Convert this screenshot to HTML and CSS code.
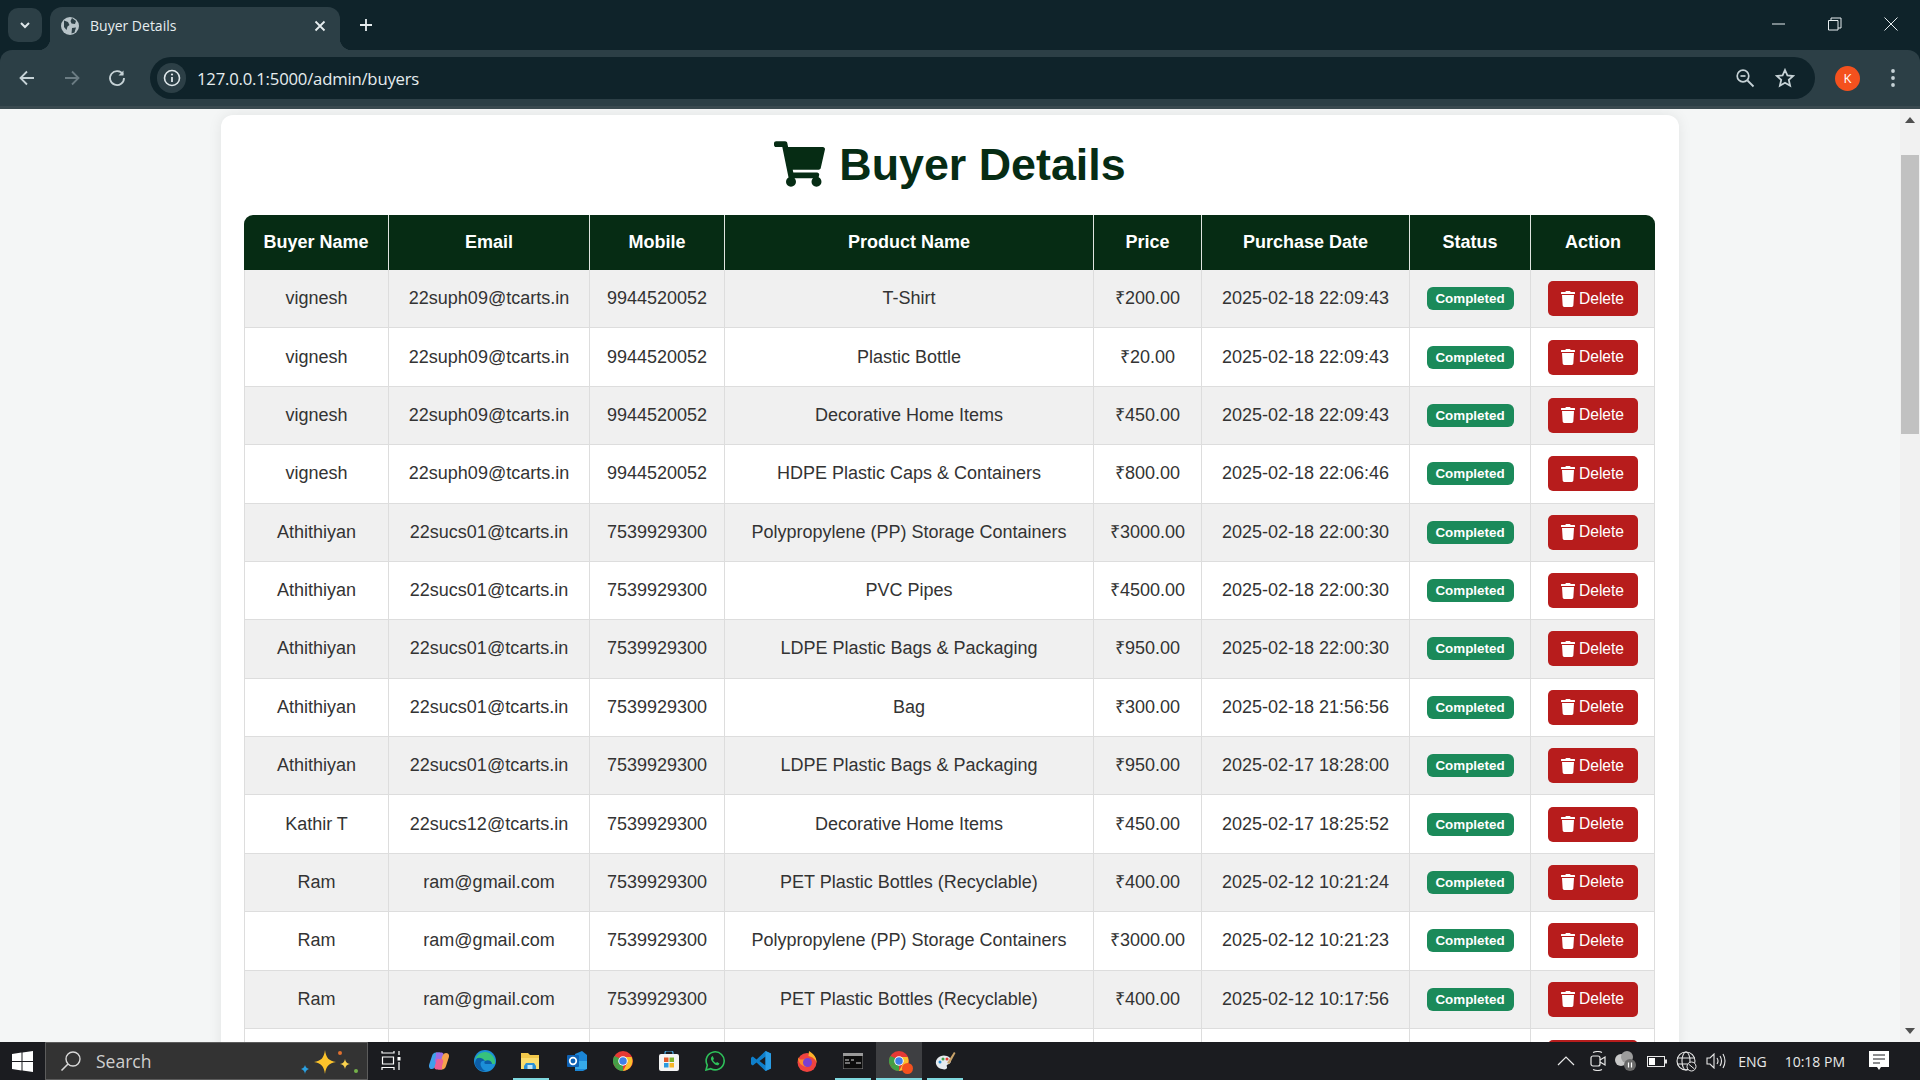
FILE: index.html
```html
<!DOCTYPE html>
<html lang="en">
<head>
<meta charset="utf-8">
<title>Buyer Details</title>
<link rel="stylesheet" href="styles.css">
</head>
<body>
<svg class="defs" width="0" height="0" aria-hidden="true">
  <defs>
    <symbol id="trash" viewBox="0 0 448 512"><path fill="currentColor" d="M432 32H312l-9.4-18.7A24 24 0 0 0 281.1 0H166.8a23.72 23.72 0 0 0-21.4 13.3L136 32H16A16 16 0 0 0 0 48v32a16 16 0 0 0 16 16h416a16 16 0 0 0 16-16V48a16 16 0 0 0-16-16zM53.2 467a48 48 0 0 0 47.9 45h245.8a48 48 0 0 0 47.9-45L416 128H32z"/></symbol>
    <symbol id="chrome" viewBox="0 0 40 40">
      <circle cx="20" cy="20" r="20" fill="#e53935"/>
      <path d="M20 20 2.7 30A20 20 0 0 0 20 40z" fill="#43a047"/>
      <path d="M20 20 2.7 30A20 20 0 0 1 2.7 10L12 14z" fill="#43a047"/>
      <path d="M20 12h17.3A20 20 0 0 1 20 40l9-17z" fill="#fbc02d"/>
      <circle cx="20" cy="20" r="9.5" fill="#fff"/>
      <circle cx="20" cy="20" r="7.5" fill="#3f7fe8"/>
    </symbol>
  </defs>
</svg>
<div class="screen">
  <header class="tabstrip">
    <button class="tabsearch">
      <svg width="14" height="14" viewBox="0 0 14 14"><path d="M3 5l4 4 4-4" fill="none" stroke="#dfe7ea" stroke-width="2"/></svg>
    </button>
    <div class="tab">
      <svg class="favicon" width="18" height="18" viewBox="0 0 18 18"><circle cx="9" cy="9" r="9" fill="#b8c4c9"/><path d="M3 3.500l4 1.500 1.500 3-2 1.500-1 3.500-2.500-3zM11 1l4 3-1 3-3.500-.5-1-2.500zM11 11l4-.5-1.500 5-3 1z" fill="#2c3f46"/></svg>
      <span class="tabtitle">Buyer Details</span>
      <svg class="tabclose" width="12" height="12" viewBox="0 0 12 12"><path d="M1.500 1.500l9 9M10.500 1.500l-9 9" stroke="#e6edef" stroke-width="1.800"/></svg>
    </div>
    <svg class="newtab" width="14" height="14" viewBox="0 0 14 14"><path d="M7 1v12M1 7h12" stroke="#e6edef" stroke-width="1.800"/></svg>
    <div class="winctl">
      <svg width="14" height="14" viewBox="0 0 14 14"><path d="M0 7h13" stroke="#e6edef" stroke-width="1"/></svg>
      <svg width="14" height="14" viewBox="0 0 14 14"><path d="M.5 3.500h9.500v9.500H.5zM3 3.500V1h10v10h-3" fill="none" stroke="#e6edef" stroke-width="1"/></svg>
      <svg width="14" height="14" viewBox="0 0 14 14"><path d="M.5.500l13 13M13.500.500l-13 13" stroke="#e6edef" stroke-width="1"/></svg>
    </div>
  </header>
  <nav class="toolbar">
    <svg class="navicon" width="18" height="18" viewBox="0 0 18 18"><path d="M16 9H3M9 2.500 2.500 9 9 15.500" fill="none" stroke="#c6d2d6" stroke-width="1.800"/></svg>
    <svg class="navicon" width="18" height="18" viewBox="0 0 18 18"><path d="M2 9h13M9 2.500 15.500 9 9 15.500" fill="none" stroke="#6b7c83" stroke-width="1.800"/></svg>
    <svg class="navicon" width="18" height="18" viewBox="0 0 18 18"><path d="M15 5.500A7 7 0 1 0 16 9" fill="none" stroke="#c6d2d6" stroke-width="1.800"/><path d="M15.500 1.500v5h-5z" fill="#c6d2d6"/></svg>
    <div class="omnibox">
      <span class="sitechip"><svg width="18" height="18" viewBox="0 0 18 18"><circle cx="9" cy="9" r="7.500" fill="none" stroke="#dfe7ea" stroke-width="1.600"/><path d="M9 8v5" stroke="#dfe7ea" stroke-width="1.800"/><circle cx="9" cy="5.500" r="1.100" fill="#dfe7ea"/></svg></span>
      <span class="url">127.0.0.1:5000/admin/buyers</span>
      <svg class="omni-zoom" width="20" height="20" viewBox="0 0 20 20"><circle cx="8" cy="8" r="5.800" fill="none" stroke="#c6d2d6" stroke-width="1.700"/><path d="M12.500 12.500l6 6" stroke="#c6d2d6" stroke-width="1.800"/><path d="M5.500 8h5" stroke="#c6d2d6" stroke-width="1.700"/></svg>
      <svg class="omni-star" width="20" height="20" viewBox="0 0 20 20"><path d="M10 2l2.400 5.400 5.800.6-4.400 3.900 1.300 5.800L10 14.700l-5.100 3 1.300-5.800L1.800 8l5.800-.6z" fill="none" stroke="#c6d2d6" stroke-width="1.800"/></svg>
    </div>
    <span class="avatar">K</span>
    <svg class="kebab" width="6" height="20" viewBox="0 0 6 20"><circle cx="3" cy="3" r="1.900" fill="#c6d2d6"/><circle cx="3" cy="10" r="1.900" fill="#c6d2d6"/><circle cx="3" cy="17" r="1.900" fill="#c6d2d6"/></svg>
  </nav>
  <div class="viewport">
    <main class="page">
      <section class="card">
        <h1 class="title">
          <svg class="cart" width="51" height="46" viewBox="0 0 576 512"><path fill="currentColor" d="M528.12 301.319l47.273-208C578.806 78.301 567.391 64 551.99 64H159.208l-9.166-44.81C147.758 8.021 137.93 0 126.529 0H24C10.745 0 0 10.745 0 24v16c0 13.255 10.745 24 24 24h69.883l70.248 343.435C147.325 417.1 136 435.222 136 456c0 30.928 25.072 56 56 56s56-25.072 56-56c0-15.674-6.447-29.835-16.824-40h209.647C430.447 426.165 424 440.326 424 456c0 30.928 25.072 56 56 56s56-25.072 56-56c0-22.172-12.888-41.332-31.579-50.405l5.517-24.276c3.413-15.018-8.002-29.319-23.403-29.319H218.117l-6.545-32h293.145c11.206 0 20.92-7.754 23.403-18.681z"/></svg>
          Buyer Details
        </h1>
        <table class="buyers">
          <colgroup>
            <col class="c-name"><col class="c-email"><col class="c-mobile"><col class="c-product"><col class="c-price"><col class="c-date"><col class="c-status"><col class="c-action">
          </colgroup>
          <thead>
            <tr><th>Buyer Name</th><th>Email</th><th>Mobile</th><th>Product Name</th><th>Price</th><th>Purchase Date</th><th>Status</th><th>Action</th></tr>
          </thead>
          <tbody>
            <tr><td>vignesh</td><td>22suph09@tcarts.in</td><td>9944520052</td><td>T-Shirt</td><td>₹200.00</td><td>2025-02-18 22:09:43</td><td><span class="badge">Completed</span></td><td><button class="del"><svg class="trash"><use href="#trash"/></svg>Delete</button></td></tr>
            <tr><td>vignesh</td><td>22suph09@tcarts.in</td><td>9944520052</td><td>Plastic Bottle</td><td>₹20.00</td><td>2025-02-18 22:09:43</td><td><span class="badge">Completed</span></td><td><button class="del"><svg class="trash"><use href="#trash"/></svg>Delete</button></td></tr>
            <tr><td>vignesh</td><td>22suph09@tcarts.in</td><td>9944520052</td><td>Decorative Home Items</td><td>₹450.00</td><td>2025-02-18 22:09:43</td><td><span class="badge">Completed</span></td><td><button class="del"><svg class="trash"><use href="#trash"/></svg>Delete</button></td></tr>
            <tr><td>vignesh</td><td>22suph09@tcarts.in</td><td>9944520052</td><td>HDPE Plastic Caps &amp; Containers</td><td>₹800.00</td><td>2025-02-18 22:06:46</td><td><span class="badge">Completed</span></td><td><button class="del"><svg class="trash"><use href="#trash"/></svg>Delete</button></td></tr>
            <tr><td>Athithiyan</td><td>22sucs01@tcarts.in</td><td>7539929300</td><td>Polypropylene (PP) Storage Containers</td><td>₹3000.00</td><td>2025-02-18 22:00:30</td><td><span class="badge">Completed</span></td><td><button class="del"><svg class="trash"><use href="#trash"/></svg>Delete</button></td></tr>
            <tr><td>Athithiyan</td><td>22sucs01@tcarts.in</td><td>7539929300</td><td>PVC Pipes</td><td>₹4500.00</td><td>2025-02-18 22:00:30</td><td><span class="badge">Completed</span></td><td><button class="del"><svg class="trash"><use href="#trash"/></svg>Delete</button></td></tr>
            <tr><td>Athithiyan</td><td>22sucs01@tcarts.in</td><td>7539929300</td><td>LDPE Plastic Bags &amp; Packaging</td><td>₹950.00</td><td>2025-02-18 22:00:30</td><td><span class="badge">Completed</span></td><td><button class="del"><svg class="trash"><use href="#trash"/></svg>Delete</button></td></tr>
            <tr><td>Athithiyan</td><td>22sucs01@tcarts.in</td><td>7539929300</td><td>Bag</td><td>₹300.00</td><td>2025-02-18 21:56:56</td><td><span class="badge">Completed</span></td><td><button class="del"><svg class="trash"><use href="#trash"/></svg>Delete</button></td></tr>
            <tr><td>Athithiyan</td><td>22sucs01@tcarts.in</td><td>7539929300</td><td>LDPE Plastic Bags &amp; Packaging</td><td>₹950.00</td><td>2025-02-17 18:28:00</td><td><span class="badge">Completed</span></td><td><button class="del"><svg class="trash"><use href="#trash"/></svg>Delete</button></td></tr>
            <tr><td>Kathir T</td><td>22sucs12@tcarts.in</td><td>7539929300</td><td>Decorative Home Items</td><td>₹450.00</td><td>2025-02-17 18:25:52</td><td><span class="badge">Completed</span></td><td><button class="del"><svg class="trash"><use href="#trash"/></svg>Delete</button></td></tr>
            <tr><td>Ram</td><td>ram@gmail.com</td><td>7539929300</td><td>PET Plastic Bottles (Recyclable)</td><td>₹400.00</td><td>2025-02-12 10:21:24</td><td><span class="badge">Completed</span></td><td><button class="del"><svg class="trash"><use href="#trash"/></svg>Delete</button></td></tr>
            <tr><td>Ram</td><td>ram@gmail.com</td><td>7539929300</td><td>Polypropylene (PP) Storage Containers</td><td>₹3000.00</td><td>2025-02-12 10:21:23</td><td><span class="badge">Completed</span></td><td><button class="del"><svg class="trash"><use href="#trash"/></svg>Delete</button></td></tr>
            <tr><td>Ram</td><td>ram@gmail.com</td><td>7539929300</td><td>PET Plastic Bottles (Recyclable)</td><td>₹400.00</td><td>2025-02-12 10:17:56</td><td><span class="badge">Completed</span></td><td><button class="del"><svg class="trash"><use href="#trash"/></svg>Delete</button></td></tr>
            <tr><td></td><td></td><td></td><td></td><td></td><td></td><td></td><td><button class="del" aria-label="Delete"></button></td></tr>
          </tbody>
        </table>
      </section>
    </main>
    <aside class="scrollbar">
      <span class="arrow-up"></span>
      <span class="thumb"></span>
      <span class="arrow-down"></span>
    </aside>
  </div>
  <footer class="taskbar">
    <div class="startbtn">
      <svg width="21" height="21" viewBox="0 0 21 21"><path d="M0 3l9.500-1.400V10H0zM10.500 1.400 21 0v10H10.500zM0 11h9.500v8.400L0 18zM10.500 11H21v10l-10.500-1.400z" fill="#fff"/></svg>
    </div>
    <div class="searchbox">
      <svg width="22" height="22" viewBox="0 0 22 22"><circle cx="13" cy="9" r="7" fill="none" stroke="#d8d8d8" stroke-width="1.400"/><path d="M8 14l-6.500 6.500" stroke="#d8d8d8" stroke-width="1.600"/></svg>
      <span class="searchtext">Search</span>
      <svg class="sparkles" width="58" height="26" viewBox="0 0 58 26">
        <path d="M24 0c1 8 4 11 11 12-7 1-10 4-11 12-1-8-4-11-11-12 7-1 10-4 11-12z" fill="#fcc32b"/>
        <path d="M44 9c.5 3 2 4.500 5 5-3 .5-4.500 2-5 5-.5-3-2-4.500-5-5 3-.5 4.500-2 5-5z" fill="#fcd34d"/>
        <path d="M4 15c.5 2 1.500 3 4 4-2.500 1-3.500 2-4 5-.5-3-1.500-4-4-5 2.500-1 3.500-2 4-4z" fill="#2a9fe0"/>
        <circle cx="39" cy="3" r="2" fill="#e0702f"/><circle cx="55" cy="21" r="2" fill="#74b24a"/>
      </svg>
    </div>
    <div class="apps">
      <span class="app app-first"><svg width="20" height="20" viewBox="0 0 20 20"><path d="M1 0v2h12V0M1.500 6h11v7h-11zM1 19v-2.500h12V19" fill="none" stroke="#fff" stroke-width="1.200"/><rect x="16.500" y="6" width="3" height="3.500" fill="#fff"/><path d="M18 0v4M18 11v8" stroke="#fff" stroke-width="1.200"/></svg></span>
      <span class="app"><svg width="20" height="20" viewBox="0 0 20 20"><path d="M7 1.500h4L7.500 12c-.8 3-2 6-4.500 6-2.500 0-3.500-2-2.800-4.500L3 5c.6-2.200 2-3.500 4-3.500z" fill="#3fa0ea"/><path d="M7 1.500h5.500c1 0 2 .7 2.200 2L12 12H8c-1.500 0-2.600-1.300-2.200-3L7 5z" fill="#9a6ce6"/><path d="M13 18.500H9L12.500 8c.8-3 2-6 4.500-6 2.500 0 3.500 2 2.800 4.500L17 15c-.6 2.200-2 3.500-4 3.500z" fill="#f6a24c"/><path d="M13 18.500H7.500c-1 0-2-.7-2.200-2L8 8h4c1.500 0 2.600 1.300 2.200 3L13 15z" fill="#ee5f92"/></svg></span>
      <span class="app"><svg width="22" height="22" viewBox="0 0 22 22"><circle cx="11" cy="11" r="11" fill="#1c8fd8"/><path d="M1 13C2 6 9 3 14 5c5 2 7 6 6 9h-8c-2 0-2-2-1-3-4-1-6 3-3 7 1 2 3 3 5 3C6 22 1 18 1 13z" fill="#0c5ea8"/><path d="M11 11c3-2 7 0 7 3h3c1-6-4-12-10-12C6 2 2 6 1 10c2-3 7-3 10 1z" fill="#37c27c"/></svg></span>
      <span class="app"><svg width="20" height="18" viewBox="0 0 20 18"><path d="M0 1h7l2 2h9v13H0z" fill="#f2c84b"/><path d="M0 6h18v11H0z" fill="#fbdc6d"/><path d="M5 11h8l2 3v3H3v-3z" fill="#2a8fd6"/><path d="M6.500 13h5v4h-5z" fill="#bfe4f7"/></svg></span>
      <span class="app"><svg width="20" height="20" viewBox="0 0 20 20"><path d="M8 3l7-3 5 4v14l-4 2H8z" fill="#1b86d6"/><path d="M8 10h12v8H8z" fill="#36a9e8"/><rect x="0" y="4" width="12" height="12" rx="1" fill="#0f62b4"/><circle cx="6" cy="10" r="3.300" fill="none" stroke="#fff" stroke-width="1.700"/></svg></span>
      <span class="app"><svg width="20" height="20"><use href="#chrome"/></svg></span>
      <span class="app"><svg width="20" height="20" viewBox="0 0 20 20"><path d="M6 4V2q0-2 2-2h4q2 0 2 2v2" fill="none" stroke="#4aa8e0" stroke-width="1.200"/><rect y="3" width="20" height="17" rx="2" fill="#f4f4f4"/><rect x="5" y="6.500" width="4.500" height="4.500" fill="#e25a2b"/><rect x="10.500" y="6.500" width="4.500" height="4.500" fill="#7cb32c"/><rect x="5" y="12" width="4.500" height="4.500" fill="#2b9ae0"/><rect x="10.500" y="12" width="4.500" height="4.500" fill="#f5b62a"/></svg></span>
      <span class="app"><svg width="20" height="20" viewBox="0 0 20 20"><path d="M1 19l1.300-4.800A9 9 0 1 1 5.800 17.700z" fill="none" stroke="#2ec05a" stroke-width="1.600"/><path d="M7 5.500c-1.500 1-1.500 3 .5 5.500s4.500 4 6 3l1-1.500-2.500-1.500-1 1c-1-.3-2.500-1.800-3-3l1-1L7.800 5z" fill="#2ec05a"/></svg></span>
      <span class="app"><svg width="20" height="20" viewBox="0 0 20 20"><path d="M14.500 0 20 2.500v15L14.500 20l-9-8.500L1.800 14.500 0 13.200V6.800l1.800-1.300 3.700 3z" fill="#0f7fcb"/><path d="M14.500 5.500 8.500 10l6 4.500z" fill="#1b1c20"/><path d="M14.500 0 20 2.500v15L14.500 20z" fill="#2a9ce4"/></svg></span>
      <span class="app"><svg width="20" height="21" viewBox="0 0 20 21"><circle cx="10" cy="11.500" r="9.500" fill="#f0433f"/><path d="M12 0c5 3 8 7 7.500 12-1-4-4-6-8-7z" fill="#fdb32b"/><path d="M1 6c1 3 4 3 6 2 3-1 6 0 7 3l-5 5C5 15 1 12 1 6z" fill="#fb8b2b"/><circle cx="10.500" cy="11.500" r="4.500" fill="#7a3fd0"/></svg></span>
      <span class="app"><svg width="20" height="16" viewBox="0 0 20 16"><rect width="20" height="16" fill="#0c0c0c" stroke="#8a8a8a"/><rect width="20" height="3" fill="#9a9a9a"/><path d="M2 7h4M8 7h3M13 10h5M2 10h5" stroke="#d8d8d8" stroke-width="1.200"/></svg></span>
      <span class="app app-active"><svg width="20" height="20"><use href="#chrome"/></svg><span class="profile-dot"></span></span>
      <span class="app"><svg width="21" height="20" viewBox="0 0 21 20"><path d="M1 13C0 7 6 3 12 5c5 2 5 6 2 8-2 1-3 1-2 3 .5 2-2 3-5 2-3-.5-5-2-6-5z" fill="#e6eaee"/><circle cx="5" cy="11" r="1.500" fill="#2a8fd6"/><circle cx="8" cy="8" r="1.500" fill="#43a047"/><circle cx="12" cy="8" r="1.500" fill="#e53935"/><path d="M12 12 19 1l1.500 1-6 11z" fill="#c9a36a"/></svg></span>
    </div>
    <div class="tray">
      <svg class="t-chev" width="18" height="10" viewBox="0 0 18 10"><path d="M1 9l8-8 8 8" fill="none" stroke="#e8e8e8" stroke-width="1.200"/></svg>
      <svg class="t-meet" width="16" height="20" viewBox="0 0 16 20"><path d="M3 1.500q5-2 9 0M3 18.500q5 2 9 0" fill="none" stroke="#e8e8e8" stroke-width="1.100"/><rect x="1" y="5" width="9" height="10" rx="2" fill="none" stroke="#e8e8e8" stroke-width="1.200"/><path d="M10 9l5-3v8l-5-3" fill="none" stroke="#e8e8e8" stroke-width="1.200"/></svg>
      <svg class="t-cloud" width="22" height="20" viewBox="0 0 22 20"><circle cx="7" cy="9" r="6" fill="#c8c8c8"/><circle cx="13" cy="6" r="6" fill="#9c9c9c"/><circle cx="16" cy="14" r="6" fill="#6a6a6a"/><path d="M14.500 11.500v5M17.500 11.500v5" stroke="#fff" stroke-width="1.200"/></svg>
      <svg class="t-batt" width="20" height="11" viewBox="0 0 20 11"><rect x=".5" y=".5" width="17" height="10" fill="none" stroke="#e8e8e8"/><rect x="2" y="2" width="6" height="7" fill="#fff"/><rect x="18" y="3.500" width="2" height="4" fill="#e8e8e8"/></svg>
      <svg class="t-globe" width="21" height="21" viewBox="0 0 21 21"><circle cx="10" cy="10" r="9" fill="none" stroke="#e8e8e8" stroke-width="1.100"/><ellipse cx="10" cy="10" rx="4" ry="9" fill="none" stroke="#e8e8e8" stroke-width="1.100"/><path d="M1 7h18M1 13h18" stroke="#e8e8e8" stroke-width="1.100"/><circle cx="15.500" cy="15.500" r="4.500" fill="#1b1c20" stroke="#e8e8e8"/><path d="M12.500 13l6 5" stroke="#e8e8e8"/></svg>
      <svg class="t-vol" width="20" height="16" viewBox="0 0 20 16"><path d="M1 5h3l4-4v14l-4-4H1z" fill="none" stroke="#e8e8e8" stroke-width="1.100"/><path d="M11 5q2 3 0 6M14 3q3 5 0 10M17 1q4 7 0 14" fill="none" stroke="#e8e8e8" stroke-width="1.100"/></svg>
      <span class="t-lang">ENG</span>
      <span class="t-time">10:18 PM</span>
      <svg class="t-note" width="20" height="20" viewBox="0 0 20 20"><path d="M0 0h20v16h-8l-2 3-2-3H0z" fill="#fff"/><path d="M4 4h12M4 8h12M4 12h7" stroke="#1b1c20" stroke-width="1"/></svg>
    </div>
  </footer>
</div>
</body>
</html>
```
FILE: styles.css
```css
* { box-sizing: border-box; }
html, body { margin: 0; height: 100%; overflow: hidden; }
.defs { position: absolute; }
.screen { display: flex; flex-direction: column; height: 1080px; width: 1920px; background: #0f232a; font-family: "Liberation Sans", Arial, sans-serif; }

.tabstrip { display: flex; align-items: flex-end; height: 50px; flex: none; background: #0f232a; position: relative; padding-left: 8px; }
.tabsearch { width: 34px; height: 34px; margin-bottom: 8px; border: 0; padding: 0; border-radius: 10px; background: #2c3f46; display: flex; align-items: center; justify-content: center; }
.tab { position: relative; width: 290px; height: 43px; margin-left: 8px; background: #2c3f46; border-radius: 12px 12px 0 0; display: flex; align-items: center; padding: 0 14px 6px 11px; }
.tab::before, .tab::after { content: ""; position: absolute; bottom: 0; width: 12px; height: 12px; }
.tab::before { left: -12px; background: radial-gradient(circle at 0 0, transparent 12px, #2c3f46 12.5px); }
.tab::after { right: -12px; background: radial-gradient(circle at 100% 0, transparent 12px, #2c3f46 12.5px); }
.favicon { flex: none; }
.tabtitle { margin-left: 11px; flex: 1; font: 14px "Open Sans", sans-serif; color: #e6edef; white-space: nowrap; }
.newtab { margin: 0 0 18px 19px; flex: none; }
.winctl { margin-left: auto; display: flex; gap: 42px; padding-right: 22px; margin-bottom: 19px; }

.toolbar { display: flex; align-items: center; height: 59px; flex: none; background: #2c3f46; border-radius: 12px 12px 0 0; border-bottom: 3px solid #3a4a50; padding-left: 18px; position: relative; }
.navicon { flex: none; margin-right: 27px; }
.omnibox { display: flex; align-items: center; width: 1665px; height: 42px; margin-left: -3px; border-radius: 21px; background: #0f232a; padding-left: 7px; }
.sitechip { width: 29px; height: 30px; border-radius: 15px; background: #2c3f46; display: flex; align-items: center; justify-content: center; flex: none; }
.url { margin-left: 11px; font: 16.700px "Open Sans", sans-serif; letter-spacing: -.2px; color: #e6edef; flex: 1; }
.omni-zoom { margin-right: 20px; flex: none; }
.omni-star { margin-right: 20px; flex: none; }
.avatar { flex: none; width: 25px; height: 25px; margin-left: 20px; border-radius: 50%; background: #f4511e; color: #fff; font: 13px "Open Sans", sans-serif; display: flex; align-items: center; justify-content: center; }
.kebab { flex: none; margin-left: 30px; }

.viewport { flex: 1; min-height: 0; display: flex; overflow: hidden; background: #f4f6f6; }
.page { flex: 1; min-width: 0; padding-top: 6px; display: flex; justify-content: center; align-items: flex-start; }
.card { width: 1458px; padding: 24px 23px 0 23px; background: #fff; border-radius: 12px; box-shadow: 0 0 14px rgba(0,0,0,.08); }
.title { display: flex; align-items: center; justify-content: center; gap: 14px; margin: 0 0 26px; height: 50px; font-size: 44.800px; font-weight: 700; color: #062c14; }
.cart { flex: none; color: #062c14; }

.buyers { width: 1411px; table-layout: fixed; border-collapse: separate; border-spacing: 0; font-size: 18px; line-height: 21px; color: #333; text-align: center; }
.c-name { width: 145px; } .c-email { width: 201px; } .c-mobile { width: 135px; } .c-product { width: 369px; }
.c-price { width: 108px; } .c-date { width: 208px; } .c-status { width: 121px; } .c-action { width: 124px; }
.buyers th { height: 55px; padding: 0 0 1px; background: #062c14; color: #fff; font-weight: 700; border-right: 1px solid #dfe5e0; }
.buyers th:first-child { border-top-left-radius: 9px; }
.buyers th:last-child { border-top-right-radius: 9px; border-right: 0; }
.buyers td { height: 58.380px; padding: 0; border-right: 1px solid #ddd; border-bottom: 1px solid #ddd; white-space: nowrap; }
.buyers td:first-child { border-left: 1px solid #ddd; }
.buyers tbody tr:nth-child(odd) td { background: #f0f0f0; }
.badge { display: inline-block; width: 87px; height: 23px; line-height: 23px; border-radius: 6px; background: #1b8a5a; color: #fff; font-size: 13.400px; font-weight: 700; vertical-align: middle; }
.del { display: inline-flex; align-items: center; justify-content: center; gap: 4px; width: 90px; height: 35px; border: 0; padding: 0; border-radius: 5px; background: #b71c1c; color: #fff; font: 15.600px "Liberation Sans", Arial, sans-serif; vertical-align: middle; }
.trash { width: 14px; height: 16px; flex: none; }

.scrollbar { flex: none; width: 20px; background: #f1f1f1; display: flex; flex-direction: column; align-items: center; padding-top: 8px; }
.arrow-up { width: 0; height: 0; border: 5px solid transparent; border-top: 0; border-bottom: 6px solid #505050; flex: none; }
.thumb { width: 18px; height: 279px; margin-top: 32px; background: #c1c1c1; flex: none; }
.arrow-down { width: 0; height: 0; border: 5px solid transparent; border-bottom: 0; border-top: 6px solid #505050; margin-top: auto; margin-bottom: 8px; flex: none; }

.taskbar { display: flex; align-items: stretch; height: 38px; flex: none; background: #1b1c20; }
.startbtn { width: 45px; flex: none; display: flex; align-items: center; justify-content: center; }
.searchbox { width: 323px; flex: none; display: flex; align-items: center; background: #333; border: 1px solid #5c5c5c; padding: 0 8px 0 14px; }
.searchtext { margin-left: 14px; font: 17.500px "Open Sans", sans-serif; color: #cfcfcf; flex: 1; }
.sparkles { flex: none; margin-top: 3px; }
.apps { display: flex; align-items: stretch; flex: none; margin-left: 2px; }
.app { width: 46px; flex: none; display: flex; align-items: center; justify-content: center; position: relative; }
.app-first { width: 41px; margin-right: 5px; }
.app-active { background: #3e3f42; }
.app:nth-child(4)::after, .app:nth-child(11)::after, .app:nth-child(12)::after, .app:nth-child(13)::after { content: ""; position: absolute; left: 5px; right: 5px; bottom: 0; height: 2px; background: #7fd8df; }
.app:nth-child(12)::after { left: 0; right: 0; }
.profile-dot { position: absolute; left: 26px; top: 21px; width: 11px; height: 11px; border-radius: 50%; background: #f4511e; }
.tray { margin-left: auto; display: flex; align-items: center; flex: none; color: #e8e8e8; font: 14.500px "Open Sans", sans-serif; padding-right: 31px; }
.t-meet { margin-left: 15px; } .t-cloud { margin-left: 8px; } .t-batt { margin-left: 11px; } .t-globe { margin-left: 9px; } .t-vol { margin-left: 9px; }
.t-lang { margin-left: 12px; font-size: 14px; }
.t-time { margin-left: 18px; font-size: 14px; }
.t-note { margin-left: 24px; }
```
